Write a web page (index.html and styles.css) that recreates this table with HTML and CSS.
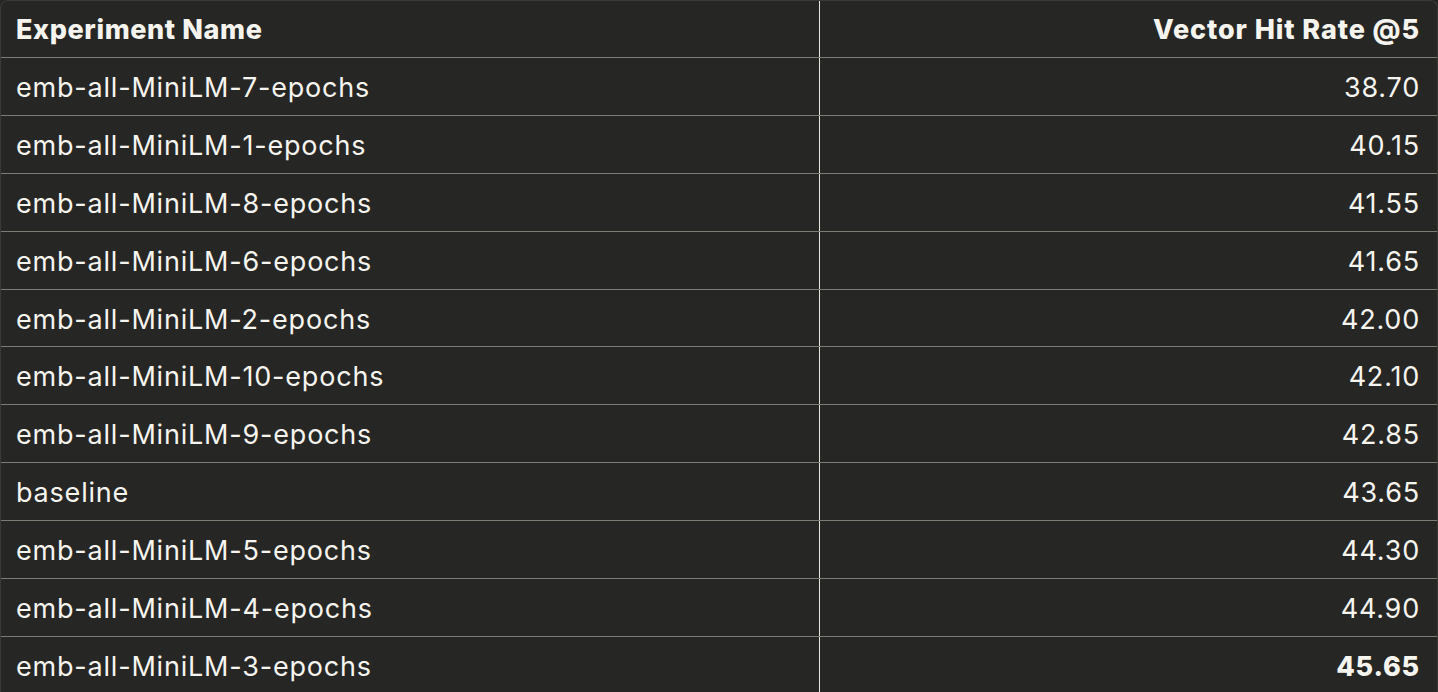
FILE: index.html
```html
<!DOCTYPE html>
<html lang="en">
<head>
<meta charset="utf-8">
<title>Experiments</title>
<link rel="stylesheet" href="styles.css">
</head>
<body>
<div class="wrap">
<table class="results">
<thead>
<tr><th class="name">Experiment Name</th><th class="num">Vector Hit Rate @5</th></tr>
</thead>
<tbody>
<tr><td class="name">emb-all-MiniLM-7-epochs</td><td class="num">38.70</td></tr>
<tr><td class="name">emb-all-MiniLM-1-epochs</td><td class="num">40.15</td></tr>
<tr><td class="name">emb-all-MiniLM-8-epochs</td><td class="num">41.55</td></tr>
<tr><td class="name">emb-all-MiniLM-6-epochs</td><td class="num">41.65</td></tr>
<tr><td class="name">emb-all-MiniLM-2-epochs</td><td class="num">42.00</td></tr>
<tr><td class="name">emb-all-MiniLM-10-epochs</td><td class="num">42.10</td></tr>
<tr><td class="name">emb-all-MiniLM-9-epochs</td><td class="num">42.85</td></tr>
<tr><td class="name">baseline</td><td class="num">43.65</td></tr>
<tr><td class="name">emb-all-MiniLM-5-epochs</td><td class="num">44.30</td></tr>
<tr><td class="name">emb-all-MiniLM-4-epochs</td><td class="num">44.90</td></tr>
<tr><td class="name">emb-all-MiniLM-3-epochs</td><td class="num best">45.65</td></tr>
</tbody>
</table>
</div>
</body>
</html>
```
FILE: styles.css
```css
html, body {
  margin: 0;
  padding: 0;
  background: #262624;
}
body {
  font-family: Inter, "Noto Sans", sans-serif;
  color: #f5f4ee;
  overflow: hidden;
}
.wrap {
  width: 1438px;
  height: 692px;
  overflow: hidden;
  border-radius: 8px 8px 0 0;
  border: 1px solid #3a3a36;
  border-bottom: none;
  box-sizing: border-box;
}
.results {
  width: 100%;
  border-collapse: collapse;
  table-layout: fixed;
}
.results th, .results td {
  height: 53.9px;
  padding: 3px 16px 0 15px;
  font-size: 27px;
  line-height: 30px;
  letter-spacing: 0.8px;
  border-bottom: 1px solid #7d7c74;
  vertical-align: middle;
  white-space: nowrap;
}
.results th {
  height: 55px;
  padding-top: 1px;
  font-weight: 800;
  letter-spacing: 0.6px;
}
.results tbody tr:last-child td { border-bottom: none; }
.results td { font-weight: 400; }
.results .name {
  width: 787px;
  text-align: left;
  border-right: 1px solid #e8e6df;
}
.results .num { text-align: right; padding-right: 17px; }
.results th.num { letter-spacing: 0.9px; }
.results .best { font-weight: 800; }
```
